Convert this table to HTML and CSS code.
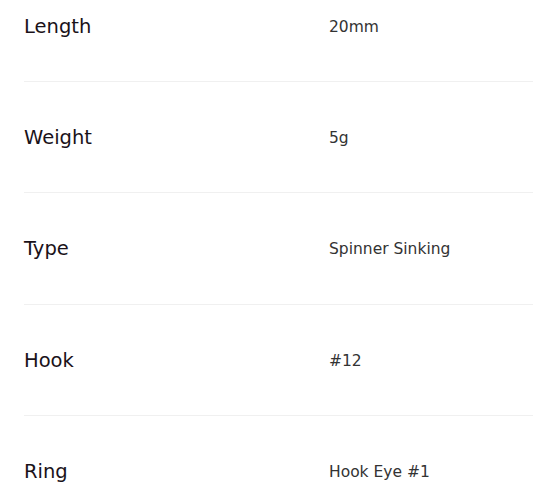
FILE: index.html
```html
<!DOCTYPE html>
<html>
<head>
<meta charset="utf-8">
<link rel="stylesheet" href="styles.css">
</head>
<body>
<div class="spec">
  <div class="row"><div class="label">Length</div><div class="value">20mm</div></div>
  <div class="row"><div class="label">Weight</div><div class="value">5g</div></div>
  <div class="row"><div class="label">Type</div><div class="value">Spinner Sinking</div></div>
  <div class="row"><div class="label">Hook</div><div class="value">#12</div></div>
  <div class="row"><div class="label">Ring</div><div class="value">Hook Eye #1</div></div>
</div>
</body>
</html>
```
FILE: styles.css
```css
html, body {
  margin: 0;
  padding: 0;
  background: #ffffff;
}
.spec {
  padding-left: 24px;
}
.row {
  display: flex;
  align-items: flex-start;
  height: 30px;
  padding: 41px 0 39.4px;
  border-bottom: 1px solid #f0f0f0;
}
.row:first-child {
  padding-top: 12px;
  padding-bottom: 39px;
}
.label {
  width: 305px;
  flex: none;
  font-family: "DejaVu Sans", sans-serif;
  font-size: 19.5px;
  line-height: 30px;
  color: #1a1219;
}
.value {
  margin-top: 5px;
  font-family: "DejaVu Sans", sans-serif;
  font-size: 15.5px;
  line-height: 20px;
  color: #333333;
}
```
